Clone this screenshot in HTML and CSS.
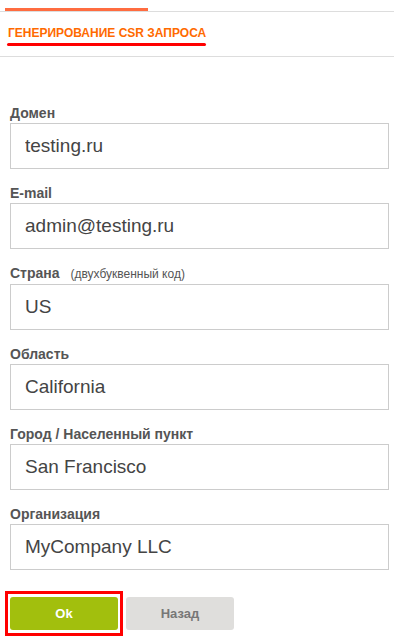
FILE: index.html
```html
<!DOCTYPE html>
<html lang="ru">
<head>
  <meta charset="UTF-8" />
  <meta name="viewport" content="width=device-width, initial-scale=1.0"/>
  <title>Генерирование CSR запроса</title>
  <link rel="stylesheet" href="styles.css">
</head>
<body>
  <div class="tabs">
    <div class="tab-active"></div>
  </div>

  <div class="title-bar">
    <span class="title">Генерирование CSR запроса</span>
  </div>

  <form class="csr-form" onsubmit="return false">
    <div class="field">
      <label for="domain">Домен</label>
      <input type="text" id="domain" value="testing.ru" />
    </div>
    <div class="field">
      <label for="email">E-mail</label>
      <input type="text" id="email" value="admin@testing.ru" />
    </div>
    <div class="field">
      <label for="country">Страна <span class="hint">(двухбуквенный код)</span></label>
      <input type="text" id="country" value="US" />
    </div>
    <div class="field">
      <label for="region">Область</label>
      <input type="text" id="region" value="California" />
    </div>
    <div class="field">
      <label for="city">Город / Населенный пункт</label>
      <input type="text" id="city" value="San Francisco" />
    </div>
    <div class="field">
      <label for="org">Организация</label>
      <input type="text" id="org" value="MyCompany LLC" />
    </div>

    <div class="buttons">
      <div class="highlight">
        <button type="submit" class="btn btn-ok">Ok</button>
      </div>
      <button type="button" class="btn btn-back">Назад</button>
    </div>
  </form>
</body>
</html>
```

FILE: styles.css
```css
body {
  margin: 0;
  font-family: "Liberation Sans", Arial, sans-serif;
  background: #fff;
  color: #555;
}
.tabs {
  padding-top: 8px;
  border-bottom: 1px solid #ddd;
}
.tab-active {
  margin-left: 5px;
  width: 143px;
  height: 3px;
  background: #ff6c40;
}
.title-bar {
  padding: 14px 0 10px 8px;
  border-bottom: 1px solid #ddd;
}
.title {
  display: block;
  width: fit-content;
  font-size: 12px;
  line-height: 14px;
  font-weight: bold;
  text-transform: uppercase;
  color: #ff6a00;
}
.title::after {
  content: "";
  display: block;
  margin: 3px 0 0 -1px;
  height: 3px;
  border-radius: 2px;
  background: #f00;
}
.csr-form {
  padding: 48px 5px 0 10px;
}
.field {
  margin-bottom: 16px;
}
.field label {
  display: block;
  font-size: 14px;
  line-height: 16px;
  font-weight: bold;
  color: #555;
  margin-bottom: 2px;
}
.hint {
  font-size: 12px;
  font-weight: normal;
  margin-left: 7px;
}
.field input {
  display: block;
  box-sizing: border-box;
  width: 100%;
  height: 46px;
  padding: 0 14px;
  border: 1px solid #ccc;
  font-family: "Liberation Sans", Arial, sans-serif;
  font-size: 19px;
  color: #444;
  background: #fff;
}
.buttons {
  display: flex;
  align-items: center;
  gap: 3px;
  margin: 21px 0 0 -5px;
}
.highlight {
  border: 3px solid #f00;
  padding: 3px 2px;
}
.btn {
  width: 108px;
  height: 33px;
  border: none;
  border-radius: 3px;
  font-family: "Liberation Sans", Arial, sans-serif;
  font-size: 13px;
  font-weight: bold;
  cursor: pointer;
}
.btn-ok {
  display: block;
  background: #a2bf0d;
  color: #fff;
}
.btn-back {
  background: #dfdedc;
  color: #777;
}
```
